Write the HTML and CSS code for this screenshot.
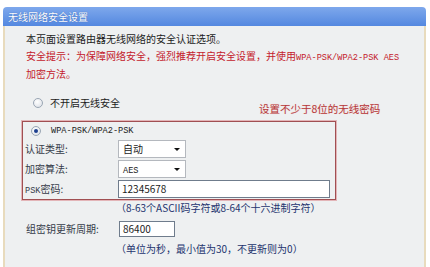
FILE: index.html
```html
<!DOCTYPE html>
<html lang="zh-CN">
<head>
  <meta charset="UTF-8" />
  <title>无线网络安全设置</title>
  <link rel="stylesheet" href="styles.css">
</head>
<body>
  <div class="panel">
    <div class="title">无线网络安全设置</div>
    <div class="content">
      <p class="intro">本页面设置路由器无线网络的安全认证选项。<br><span class="warn">安全提示：为保障网络安全，强烈推荐开启安全设置，并使用<span class="en">WPA-PSK/WPA2-PSK AES</span><br>加密方法。</span></p>

      <div class="option first"><span class="radio"></span>不开启无线安全</div>

      <div class="note">设置不少于8位的无线密码</div>

      <div class="wpa-box">
        <div class="option"><span class="radio on"></span><span class="en">WPA-PSK/WPA2-PSK</span></div>
        <div class="row">
          <label>认证类型:</label>
          <div class="select">自动<span class="arrow"></span></div>
        </div>
        <div class="row">
          <label>加密算法:</label>
          <div class="select"><span class="en">AES</span><span class="arrow"></span></div>
        </div>
        <div class="row">
          <label><span class="en">PSK</span>密码:</label>
          <div class="input wide">12345678</div>
        </div>
      </div>

      <div class="hint">（8-63个ASCII码字符或8-64个十六进制字符）</div>

      <div class="row group">
        <label>组密钥更新周期:</label>
        <div class="input short">86400</div>
      </div>

      <div class="hint">（单位为秒，最小值为30，不更新则为0）</div>
    </div>
  </div>
</body>
</html>
```

FILE: styles.css
```css
* {
  box-sizing: border-box;
}

body {
  margin: 0;
  padding-top: 7px;
  height: 100vh;
  display: flex;
  flex-direction: column;
  background: #ffffff;
  font-family: 'Noto Sans CJK SC', 'Noto Sans', sans-serif;
  font-size: 10px;
  color: #1c1c1c;
  overflow: hidden;
}

.panel {
  position: relative;
  flex: 1;
  display: flex;
  flex-direction: column;
  margin: 0 4px 0 3px;
}

.title {
  height: 19px;
  line-height: 19px;
  padding-left: 5px;
  color: #ffffff;
  background: linear-gradient(#7ea8ec, #5488e0);
  border-radius: 4px 4px 0 0;
  text-shadow: 0 0 1px #2f5aa8;
}

.content {
  flex: 1;
  padding: 5px 0 0 21px;
  background: #eef0f1;
  border-left: 2px solid #e8dbbd;
  border-right: 2px solid #e8dbbd;
}

.intro {
  margin: 0;
  line-height: 16.5px;
  white-space: nowrap;
}

.warn {
  color: #c41a2c;
}

.en {
  font-family: 'Liberation Mono', monospace;
  font-size: 8.6px;
}

.option {
  display: flex;
  align-items: center;
  height: 16px;
}

.option.first {
  margin-top: 12px;
  padding-left: 7px;
  gap: 7px;
}

.radio {
  width: 10px;
  height: 10px;
  border-radius: 50%;
  border: 1px solid #9aa6b4;
  background: radial-gradient(circle at 40% 35%, #ffffff, #d8dde4);
  display: flex;
  align-items: center;
  justify-content: center;
}

.radio.on::after {
  content: '';
  width: 4px;
  height: 4px;
  border-radius: 50%;
  background: #1d3f8f;
}

.note {
  position: absolute;
  left: 256px;
  top: 94px;
  font-size: 10.5px;
  color: #b5393a;
  text-shadow: 0 0 1px #f3c8c8;
}

.wpa-box {
  margin: 10px 0 0 -4px;
  width: 314px;
  padding: 0 0 0 2px;
  border: 1px solid #a04f52;
  box-shadow: 0 0 0 1px #e3b5b8;
}

.wpa-box .option {
  padding-left: 6px;
  gap: 10px;
  margin-top: 1px;
}

.row {
  display: flex;
  align-items: center;
  height: 20px;
}

.row label {
  width: 93px;
  color: #363c4a;
}

.select {
  position: relative;
  width: 68px;
  height: 18px;
  line-height: 16px;
  padding-left: 4px;
  background: #ffffff;
  border: 1px solid #b4b8be;
}

.arrow {
  position: absolute;
  right: 5px;
  top: 7px;
  border-left: 3px solid transparent;
  border-right: 3px solid transparent;
  border-top: 3px solid #111111;
}

.input {
  height: 18px;
  line-height: 16px;
  padding-left: 3px;
  background: #ffffff;
  border: 1px solid #6f7c8c;
}

.input.wide {
  width: 212px;
}

.row.group {
  margin-top: 3px;
}

.input.short {
  width: 56px;
  height: 16px;
  line-height: 14px;
}

.hint {
  margin-left: 90px;
  height: 16px;
  line-height: 16px;
  color: #23336e;
  white-space: nowrap;
}

.row.group + .hint {
  margin-top: 2px;
}
```
